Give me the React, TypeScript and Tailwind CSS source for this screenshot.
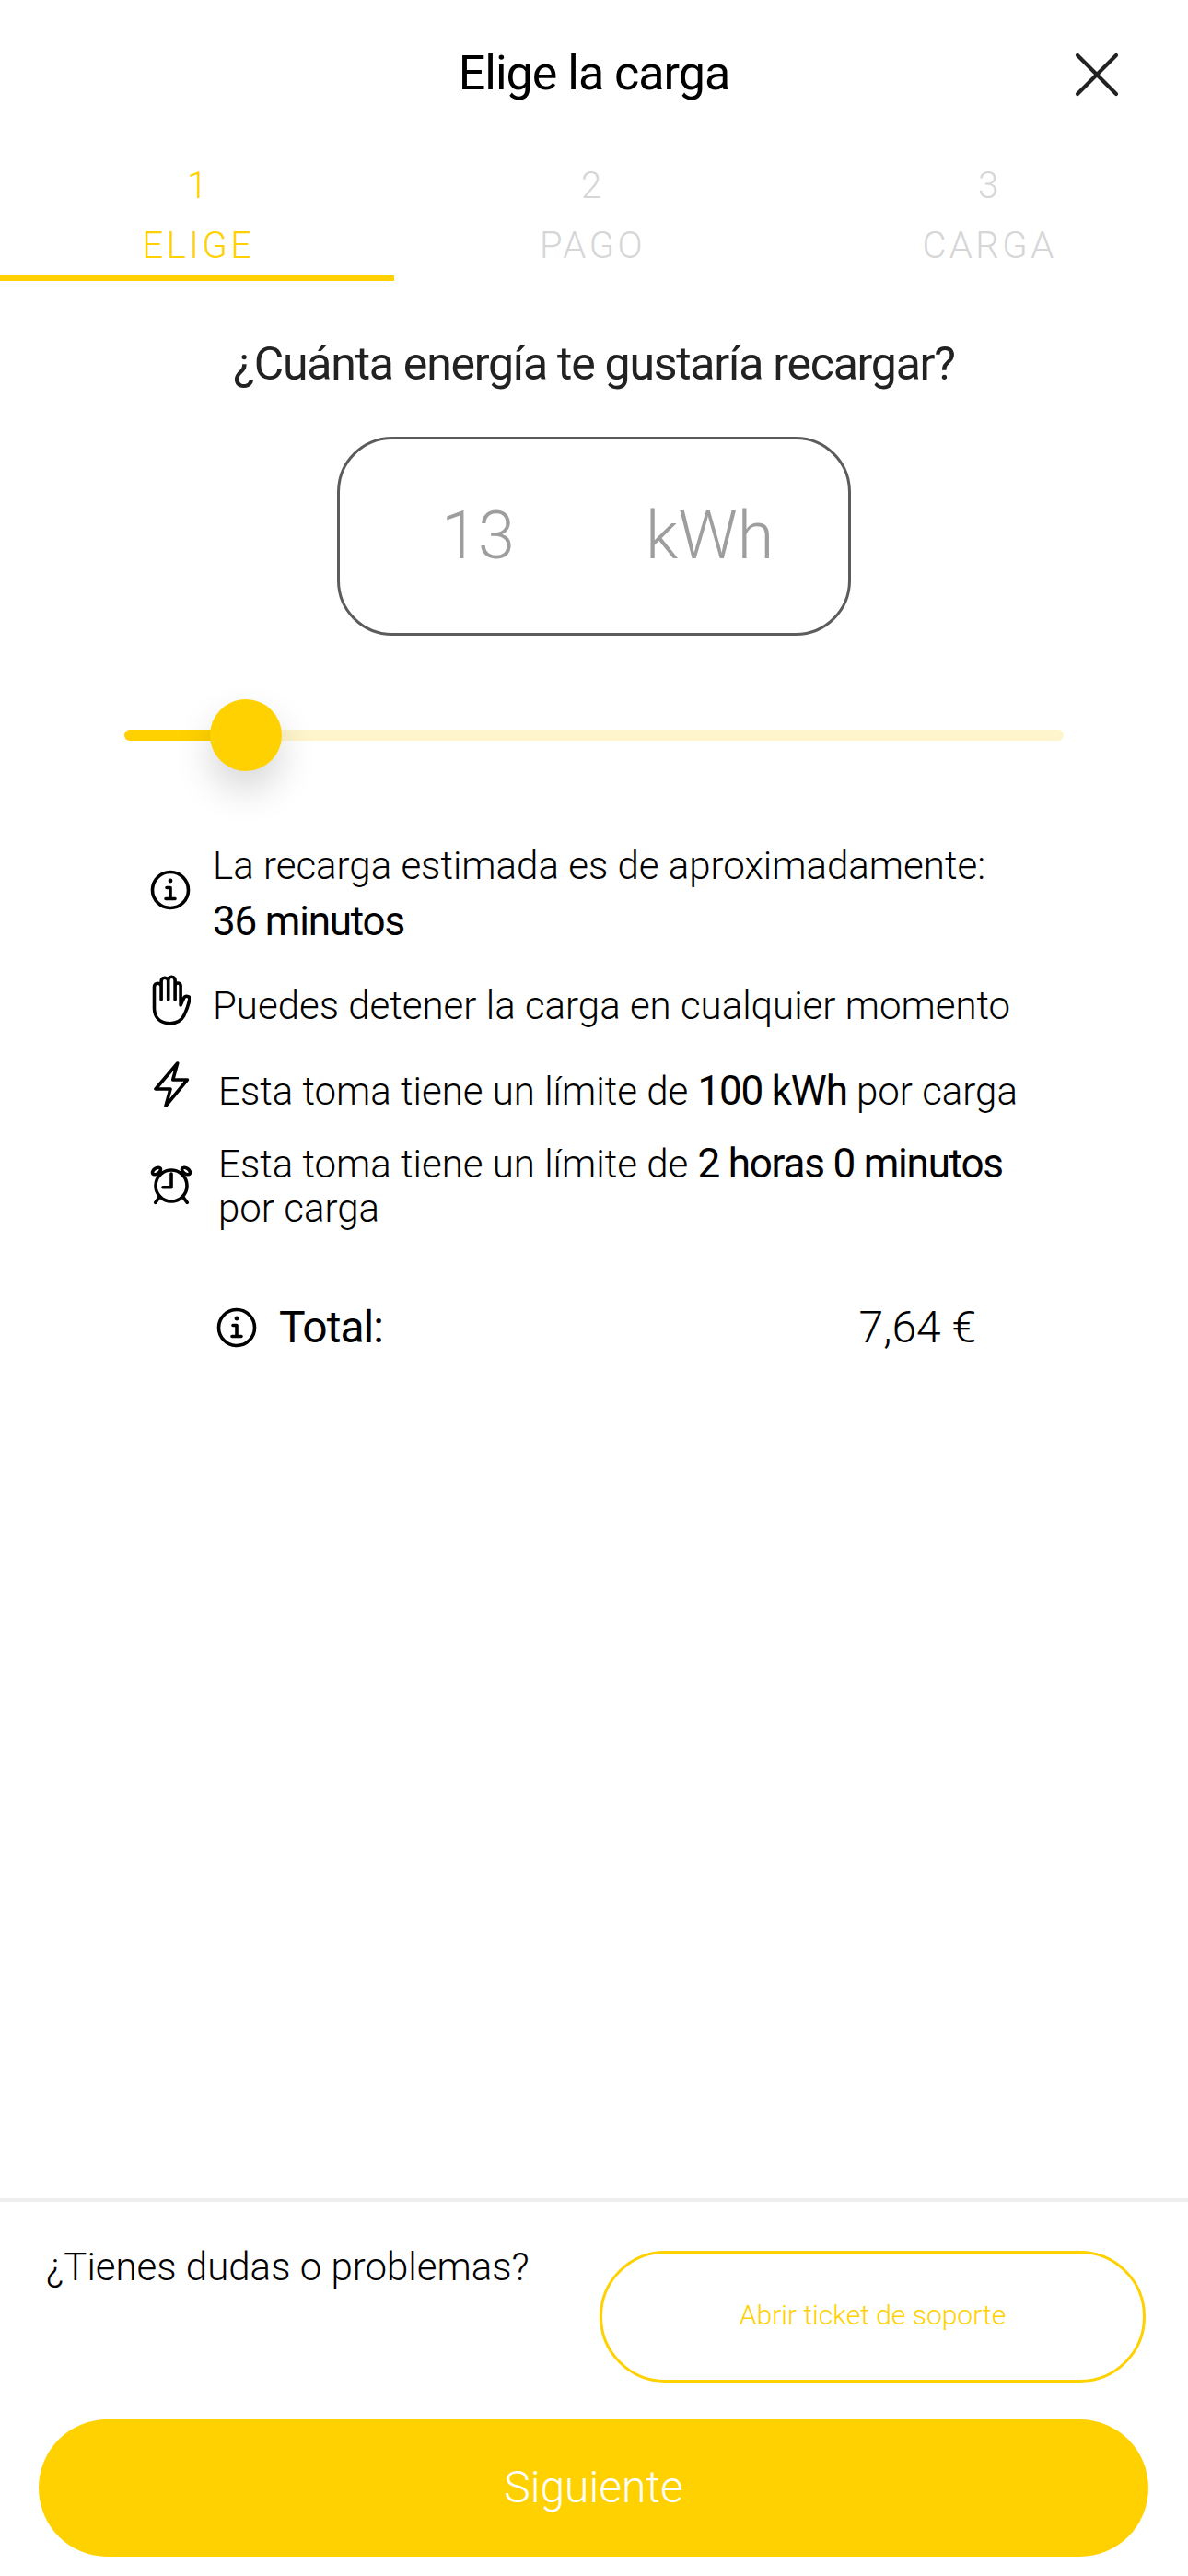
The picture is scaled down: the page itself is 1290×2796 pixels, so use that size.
import { X } from "lucide-react";

const font = "font-['Roboto',sans-serif]";

function InfoIcon() {
  return (
    <svg width="44" height="44" viewBox="0 0 44 44" fill="none" stroke="#000" strokeWidth="3.6" strokeLinecap="round" strokeLinejoin="round">
      <circle cx="22" cy="22" r="19.5" />
      <circle cx="22" cy="12" r="2.4" fill="#000" stroke="none" />
      <path d="M18 19.500h4v12M17 31.500h10" />
    </svg>
  );
}

function HandIcon() {
  return (
    <svg width="44" height="56" viewBox="-2.5 0 44 56" fill="none" stroke="#000" strokeWidth="3.6" strokeLinecap="round" strokeLinejoin="round">
      <path d="M2 36V13a3.800 3.800 0 0 1 7.600 0v14M9.600 27V7a3.800 3.800 0 0 1 7.600 0v20M17.200 27V6a3.700 3.700 0 0 1 7.400 0v21M24.600 27V12a3 3 0 0 1 6 0v21l3.400-7.500c1.800-3.500 7-2.500 6.300 1.200-.8 4.500-3.300 12-6.300 18-2.700 5-8 8-14.500 8C9 52.700 2 47 2 36" />
    </svg>
  );
}

function BoltIcon() {
  return (
    <svg width="44" height="52" viewBox="-2 0 44 52" fill="none" stroke="#000" strokeWidth="3.6" strokeLinecap="round" strokeLinejoin="round">
      <path d="M27.700 2L4 30h16l-5 18.300L38.300 20H22.700L27.700 2z" />
    </svg>
  );
}

function AlarmIcon() {
  return (
    <svg width="46" height="46" viewBox="0 0 46 46" fill="none" stroke="#000" strokeWidth="3.6" strokeLinecap="round" strokeLinejoin="round">
      <circle cx="23" cy="24" r="17" />
      <path d="M23 11v14.700h-9M10.700 35.700l-5 6.600M35.300 35.700l5 6.600" />
      <ellipse cx="7" cy="8" rx="5" ry="3" transform="rotate(-35 7 8)" />
      <ellipse cx="39" cy="8" rx="5" ry="3" transform="rotate(35 39 8)" />
    </svg>
  );
}

function Step({ n, label, active, last }: { n: string; label: string; active?: boolean; last?: boolean }) {
  return (
    <div className={`flex h-[130px] flex-col items-center border-b-[6px] ${last ? "flex-1" : "w-[428px]"} ${active ? "border-[#ffd100] text-[#ffd100]" : "border-transparent text-[#d6d6d6]"}`}>
      <span className="mt-[3px] text-[40px] leading-[48px] font-light">{n}</span>
      <span className="mt-[18px] pl-[3px] text-[40px] leading-[45px] font-light tracking-[3.5px]">{label}</span>
    </div>
  );
}

export default function App() {
  return (
    <div className={`${font} flex h-[2796px] w-[1290px] flex-col overflow-hidden bg-white text-black`}>
      {/* Header */}
      <div className="relative flex h-[160px] items-center justify-center">
        <h1 className="text-[52px] leading-[60px] font-normal tracking-[-1px]">Elige la carga</h1>
        <X className="absolute top-[39px] right-[57px] h-[84px] w-[84px] text-[#222]" strokeWidth={1.2} />
      </div>

      {/* Steps */}
      <div className="mt-[15px] flex">
        <Step n="1" label="ELIGE" active />
        <Step n="2" label="PAGO" />
        <Step n="3" label="CARGA" last />
      </div>

      <p className="mt-[60px] text-center text-[50px] leading-[60px] tracking-[-1.25px] text-[#222]">¿Cuánta energía te gustaría recargar?</p>

      {/* kWh box */}
      <div className="mx-auto mt-[49px] flex h-[216px] w-[558px] items-center rounded-[60px] border-[3px] border-[#5c5c5c] text-[72px] leading-none font-light text-[#9e9e9e]">
        <span className="ml-[110px] w-[222px]">13</span>
        <span>kWh</span>
      </div>

      {/* Slider */}
      <div className="relative mx-[135px] mt-[102px] h-[12px] rounded-full bg-[#fff5cc]">
        <div className="h-full w-[132px] rounded-full bg-[#ffd100]" />
        <div className="absolute top-[-33px] left-[93px] h-[78px] w-[78px] rounded-full bg-[#ffd100] shadow-[0_20px_40px_rgba(0,0,0,0.16)]" />
      </div>

      {/* Info rows */}
      <div className="mt-[106px] ml-[163px] w-[960px] text-[42px] font-light">
        <div className="flex items-center gap-[24px]">
          <div className="-translate-y-[4px]">
            <InfoIcon />
          </div>
          <div className="leading-[60px]">
            <p>La recarga estimada es de aproximadamente:</p>
            <p className="text-[44px] font-normal tracking-[-1.2px]">36 minutos</p>
          </div>
        </div>
        <div className="mt-[32px] flex items-center gap-[24px]">
          <div className="-translate-y-[6px]">
            <HandIcon />
          </div>
          <p className="leading-[60px]">Puedes detener la carga en cualquier momento</p>
        </div>
        <div className="mt-[32px] flex items-center gap-[30px]">
          <div className="-translate-y-[7px]">
            <BoltIcon />
          </div>
          <p className="leading-[60px]">Esta toma tiene un límite de <b className="text-[44px] font-normal tracking-[-1.2px]">100 kWh</b> por carga</p>
        </div>
        <div className="mt-[24px] flex items-center gap-[28px]">
          <div className="-translate-y-[2px]">
            <AlarmIcon />
          </div>
          <p className="w-[880px] leading-[48px]">Esta toma tiene un límite de <b className="text-[44px] font-normal tracking-[-1.2px]">2 horas 0 minutos</b> por carga</p>
        </div>
      </div>

      {/* Total */}
      <div className="mt-[75px] ml-[235px] flex w-[825px] items-center">
        <InfoIcon />
        <span className="ml-[24px] text-[48px] leading-[60px] tracking-[-1px]">Total:</span>
        <span className="ml-auto text-[48px] leading-[60px] font-light">7,64 €</span>
      </div>

      {/* Footer */}
      <div className="mt-auto border-t-[4px] border-[#eeeeee] pb-[21px]">
        <div className="flex items-start justify-between pt-[53px] pr-[46px] pl-[50px]">
          <p className="mt-[-12px] text-[42px] leading-[60px] font-light">¿Tienes dudas o problemas?</p>
          <button className="flex h-[143px] w-[593px] items-center justify-center rounded-full border-[3px] border-[#ffd100] pb-[5px] text-[30px] font-light text-[#ffd100]">
            Abrir ticket de soporte
          </button>
        </div>
        <button className="mx-[42px] mt-[40px] flex h-[149px] w-[1205px] items-center justify-center rounded-full bg-[#ffd100] pb-[2px] text-[48px] font-light text-white">
          Siguiente
        </button>
      </div>
    </div>
  );
}
